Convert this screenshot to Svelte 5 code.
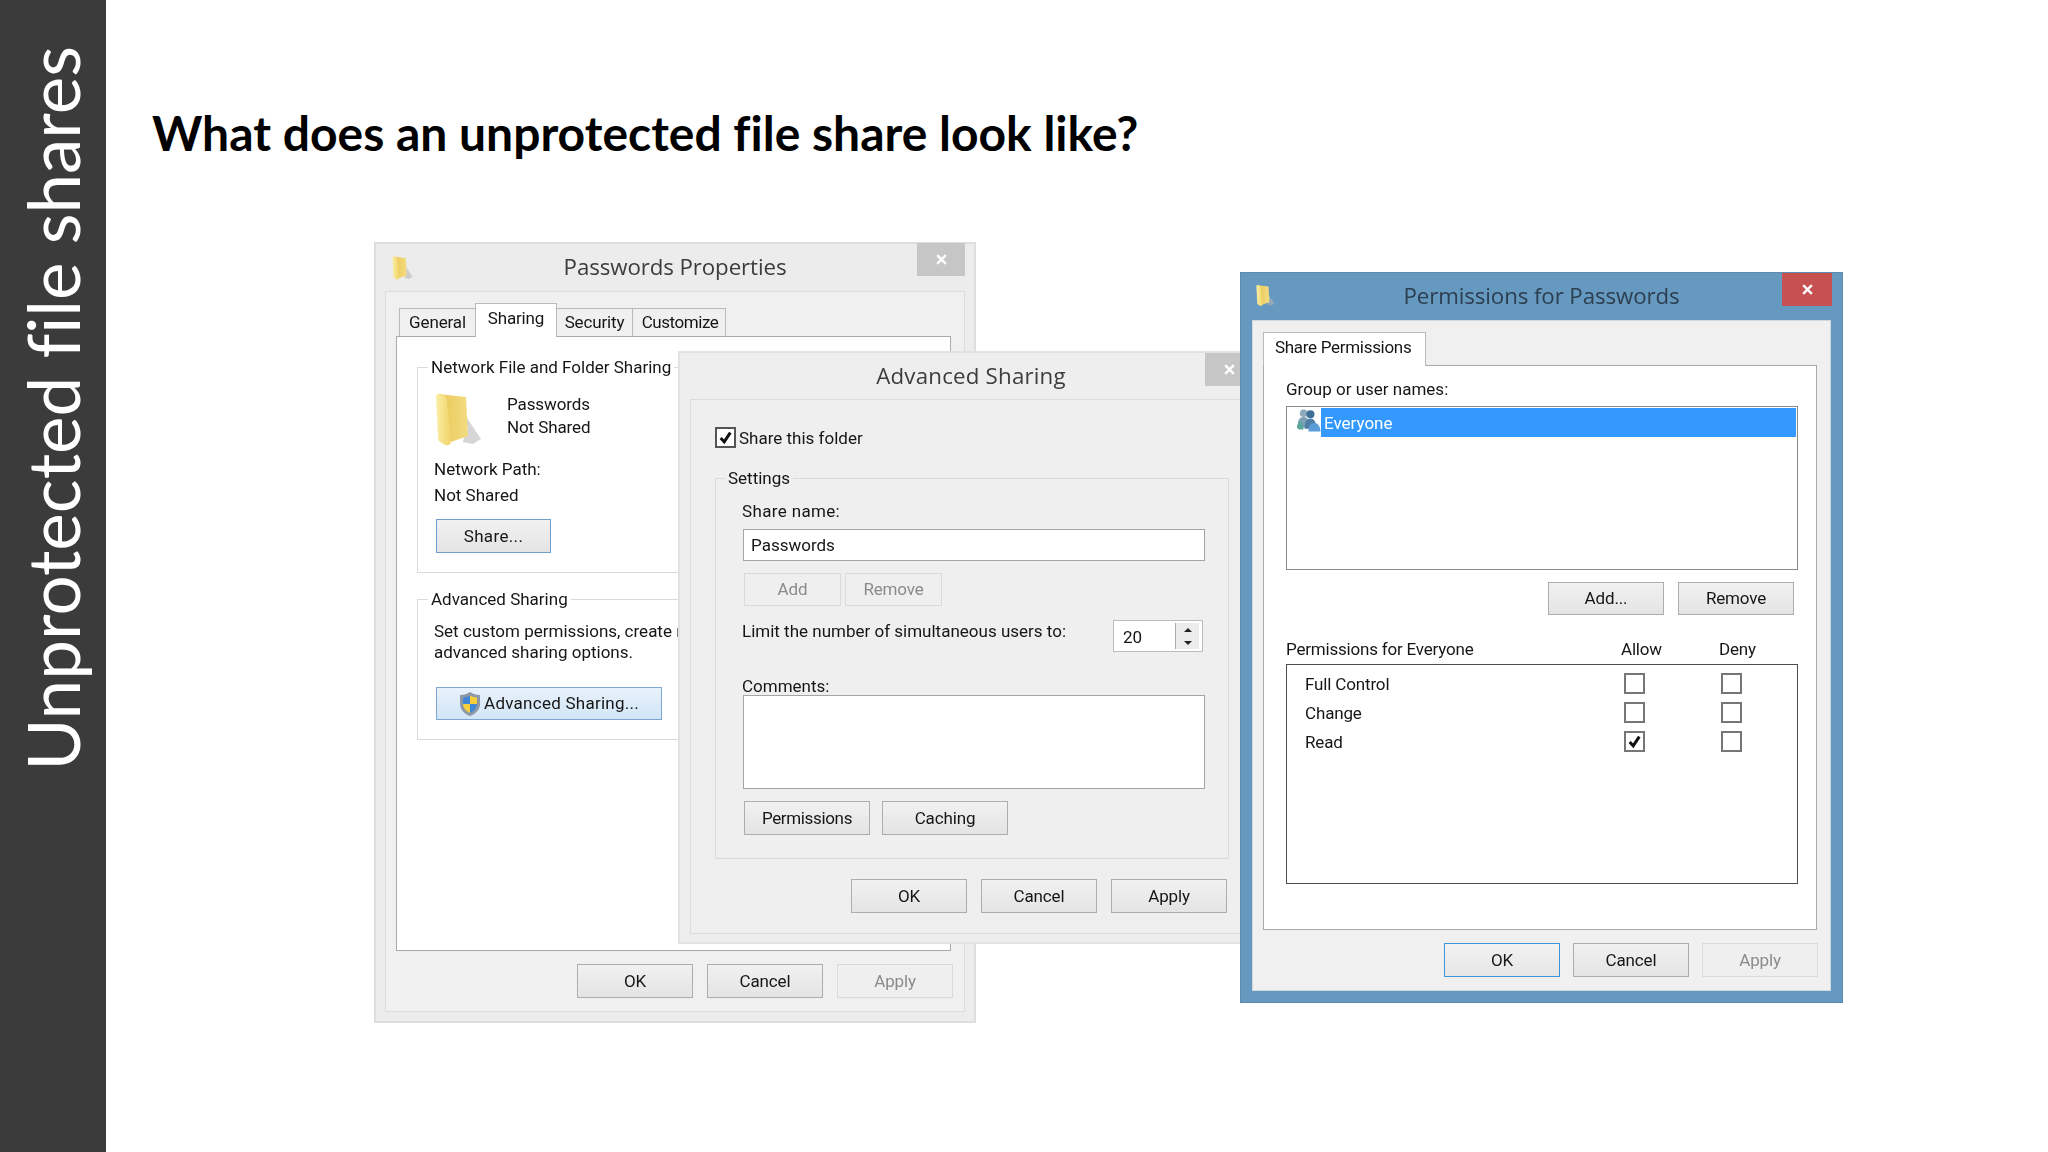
<script>
  const perms = [
    { name: 'Full Control', allow: false },
    { name: 'Change', allow: false },
    { name: 'Read', allow: true }
  ];
</script>

{#snippet folder()}
  <svg viewBox="0 0 47 55" class="fill">
    <defs>
      <linearGradient id="fa" x1="0" y1="0" x2="1" y2="0"><stop offset="0" stop-color="#fbeea6"/><stop offset="1" stop-color="#f0d467"/></linearGradient>
      <linearGradient id="fb" x1="0" y1="0" x2="1" y2="0"><stop offset="0" stop-color="#e9c655"/><stop offset="1" stop-color="#f3dc80"/></linearGradient>
    </defs>
    <path d="M32 26 L46 47 L38 52 L28 50Z" fill="#b5b5b5" opacity=".55"/>
    <path d="M3 2 L31 5 L33 44 L13 51Z" fill="url(#fb)"/>
    <path d="M1 5 C1 2 4 1 7 2 C11 3 12 6 12 10 L16 49 C16 52 14 54 10 53 L5 50 C3 49 3 47 3 45Z" fill="url(#fa)"/>
  </svg>
{/snippet}

{#snippet close()}
  <svg viewBox="0 0 12 12" class="x"><path d="M2 2 L10 10 M10 2 L2 10" stroke="#fff" stroke-width="2.2" fill="none"/></svg>
{/snippet}

{#snippet check()}
  <svg viewBox="0 0 14 14" class="tick"><path d="M2.5 7.5 L5.8 11 L11.5 2.5" stroke="#111" stroke-width="2.8" fill="none"/></svg>
{/snippet}

<div class="page">
  <aside class="side"><span class="side-text">Unprotected file shares</span></aside>

  <main class="stage">
    <h1>What does an unprotected file share look like?</h1>

    <!-- Passwords Properties -->
    <section class="win w1">
      <header class="titlebar">
        <span class="ficon">{@render folder()}</span>
        <span class="title">Passwords Properties</span>
        <span class="closebtn">{@render close()}</span>
      </header>
      <div class="client c1">
        <div class="tabs">
          <span class="tab t-gen">General</span>
          <span class="tab active t-sha">Sharing</span>
          <span class="tab t-sec">Security</span>
          <span class="tab t-cus">Customize</span>
        </div>
        <div class="panel p1">
          <fieldset class="grp g-net">
            <legend>Network File and Folder Sharing</legend>
            <div class="folder-row">
              <span class="bigfolder">{@render folder()}</span>
              <div class="folder-text"><div>Passwords</div><div>Not Shared</div></div>
            </div>
            <div class="path"><div>Network Path:</div><div>Not Shared</div></div>
            <button class="btn hot share">Share...</button>
          </fieldset>
          <fieldset class="grp g-adv">
            <legend>Advanced Sharing</legend>
            <div class="adv-text"><div>Set custom permissions, create r</div><div>advanced sharing options.</div></div>
            <button class="btn blue advbtn">
              <svg viewBox="0 0 22 26" class="shield">
                <path d="M11 1 C14 3 17 4 21 4 L21 13 C21 19 16 23 11 25 C6 23 1 19 1 13 L1 4 C5 4 8 3 11 1Z" fill="#8d98a6"/>
                <path d="M11 4.5 V13 H4 V6.5 C6.5 6.5 9 5.8 11 4.5Z" fill="#3f86d6"/>
                <path d="M11 4.5 V13 H18 V6.5 C15.5 6.5 13 5.8 11 4.5Z" fill="#f6cf3a"/>
                <path d="M4 13 H11 V22 C7.5 20.5 4.5 17.5 4 13Z" fill="#f6cf3a"/>
                <path d="M18 13 H11 V22 C14.5 20.5 17.5 17.5 18 13Z" fill="#3f86d6"/>
              </svg>
              <span>Advanced Sharing...</span>
            </button>
          </fieldset>
        </div>
        <div class="actions a1">
          <button class="btn">OK</button>
          <button class="btn">Cancel</button>
          <button class="btn off">Apply</button>
        </div>
      </div>
    </section>

    <!-- Advanced Sharing -->
    <section class="win w2">
      <header class="titlebar tb2">
        <span class="title">Advanced Sharing</span>
        <span class="closebtn cb2">{@render close()}</span>
      </header>
      <div class="client c2">
        <label class="checkline">
          <span class="cbox cbig">{@render check()}</span>
          <span>Share this folder</span>
        </label>
        <fieldset class="grp g-set">
          <legend>Settings</legend>
          <div class="lbl sn">Share name:</div>
          <div class="input">Passwords</div>
          <div class="pair">
            <button class="btn off add">Add</button>
            <button class="btn off add">Remove</button>
          </div>
          <div class="limit">
            <span>Limit the number of simultaneous users to:</span>
            <div class="spin">
              <span class="spinval">20</span>
              <div class="spinbtns">
                <svg viewBox="0 0 10 6" class="arr"><path d="M5 1 L9 5 H1Z" fill="#222"/></svg>
                <svg viewBox="0 0 10 6" class="arr"><path d="M1 1 H9 L5 5Z" fill="#222"/></svg>
              </div>
            </div>
          </div>
          <div class="lbl cm">Comments:</div>
          <div class="textarea"></div>
          <div class="pair two">
            <button class="btn perm p-name">Permissions</button>
            <button class="btn perm">Caching</button>
          </div>
        </fieldset>
        <div class="actions a2">
          <button class="btn">OK</button>
          <button class="btn">Cancel</button>
          <button class="btn">Apply</button>
        </div>
      </div>
    </section>

    <!-- Permissions for Passwords -->
    <section class="win w3">
      <header class="titlebar tb3">
        <span class="ficon f3">{@render folder()}</span>
        <span class="title">Permissions for Passwords</span>
        <span class="closebtn red">{@render close()}</span>
      </header>
      <div class="client c3">
        <div class="tabs tabs3"><span class="tab active t-share">Share Permissions</span></div>
        <div class="panel p3">
          <div class="lbl gu">Group or user names:</div>
          <div class="list">
            <div class="list-row">
              <svg viewBox="0 0 26 24" class="users">
                <circle cx="8" cy="5" r="4" fill="#8fa9bd"/>
                <path d="M2 20 C1 12 4 9 8 9 C12 9 14 12 14 20Z" fill="#7ba0b3"/>
                <circle cx="15" cy="6" r="4.2" fill="#3f6f98"/>
                <path d="M9 21 C9 14 11 10.5 15 10.5 C19 10.5 21 14 21 21Z" fill="#4c7ea6"/>
                <path d="M13 24 C13 18 15 15 19 15 C23 15 25 18 25.5 24Z" fill="#5a9bd8"/>
                <path d="M1 20 C1 16 3 14 6 14 L8 22 L3 22Z" fill="#5aa79a"/>
              </svg>
              <span class="sel">Everyone</span>
            </div>
          </div>
          <div class="list-actions">
            <button class="btn">Add...</button>
            <button class="btn">Remove</button>
          </div>
          <div class="perm-head">
            <span>Permissions for Everyone</span>
            <span class="h-allow">Allow</span>
            <span class="h-deny">Deny</span>
          </div>
          <div class="perm-box">
            {#each perms as p}
              <div class="perm-row">
                <span>{p.name}</span>
                <span class="cbox c-allow">{#if p.allow}{@render check()}{/if}</span>
                <span class="cbox c-deny"></span>
              </div>
            {/each}
          </div>
        </div>
        <div class="actions a3">
          <button class="btn default">OK</button>
          <button class="btn">Cancel</button>
          <button class="btn off">Apply</button>
        </div>
      </div>
    </section>
  </main>
</div>

<style>
  :global(body) { margin: 0; background: #fff; }
  .page { display: flex; width: 2048px; height: 1152px; overflow: hidden; font-family: Roboto, "Liberation Sans", sans-serif; color: #161616; }
  .side { width: 106px; flex: none; background: #3b3b3b; display: flex; flex-direction: column; align-items: center; }
  .side-text {
    writing-mode: vertical-rl; transform: rotate(180deg);
    margin-top: 46px; color: #fff; font-family: Lato, sans-serif; font-weight: 400; font-size: 71px; line-height: 80px; white-space: nowrap;
    font-variant-ligatures: none;
  }
  .stage { position: relative; flex: 1; }
  h1 { margin: 0; padding: 105px 0 0 46px; font-family: Lato, sans-serif; font-weight: 700; font-size: 48px; line-height: 56px; color: #000; white-space: nowrap; font-variant-ligatures: none; }

  .win { position: absolute; box-sizing: border-box; display: flex; flex-direction: column; filter: blur(.4px); }
  .w1 { left: 268px; top: 242px; width: 602px; height: 781px; background: #ececec; border: 2px solid #dedede; }
  .w2 { left: 572px; top: 351px; width: 562px; height: 593px; background: #eeeeee; border: 2px solid #e2e2e2; border-right: none; }
  .w3 { left: 1134px; top: 272px; width: 603px; height: 731px; background: #6699bf; border: 1px solid #5d8cb0; }

  .titlebar { position: relative; height: 47px; flex: none; display: flex; align-items: center; justify-content: center; padding-bottom: 2px; box-sizing: border-box; }
  .tb2 { height: 46px; padding-left: 22px; }
  .tb3 { height: 47px; }
  .title { font-family: "Open Sans", sans-serif; font-size: 22.3px; color: #3c3c3c; letter-spacing: -.1px; }
  .tb2 .title { letter-spacing: .2px; }
  .tb3 .title { color: #2c3e50; }
  .ficon { position: absolute; left: 16px; top: 11px; width: 21px; height: 26px; }
  .f3 { left: 15px; top: 10px; width: 19px; height: 25px; }
  .fill { display: block; width: 100%; height: 100%; }
  .closebtn { position: absolute; right: 9px; top: -1px; width: 48px; height: 33px; background: #c6c6c6; display: flex; align-items: center; justify-content: center; }
  .cb2 { right: -13px; top: 0; width: 48px; }
  .red { right: 10px; top: 0; width: 50px; background: #c75050; }
  .x { width: 13px; height: 13px; }

  .client { box-sizing: border-box; background: #f0f0f0; border: 1px solid #dcdcdc; display: flex; flex-direction: column; flex: 1; }
  .c1 { margin: 0 9px 9px 9px; padding: 11px 13px 0 10px; }
  .c2 { margin: 0 0 8px 10px; padding: 27px 11px 0 24px; border-right: none; background: #efefef; }
  .c3 { margin: 0 11px 11px 11px; padding: 11px 13px 0 10px; border: 1px solid #cfd8df; }

  .tabs { display: flex; align-items: flex-end; height: 33px; padding-left: 3px; position: relative; z-index: 1; }
  .tab { box-sizing: border-box; height: 28px; border: 1px solid #b9b9b9; border-bottom: none; background: #f0f0f0; font-size: 17px; line-height: 27px; text-align: center; letter-spacing: -.15px; }
  .tab.active { height: 34px; background: #fff; line-height: 29px; border-bottom: none; margin-bottom: -1px; padding-bottom: 5px; }
  .t-gen { width: 76px; border-right: none; }
  .t-sha { width: 82px; }
  .t-sec { width: 76px; border-left: none; }
  .t-cus { width: 93px; border-left: none; letter-spacing: -.45px; padding-left: 2px; }
  .tabs3 { padding-left: 0; }
  .t-share { width: 163px; text-align: left; padding-left: 11px; letter-spacing: -.3px; }

  .panel { background: #fff; border: 1px solid #a9a9a9; box-sizing: border-box; }
  .p1 { height: 615px; padding: 20px 0 0 20px; margin-right: 0; }
  .p3 { height: 565px; padding: 13px 18px 0 22px; }

  .grp { margin: 0; border: 1px solid #dadada; padding: 0 17px; font-size: 17px; min-width: 0; }
  legend { font-size: 17px; line-height: 20px; padding: 0 3px; margin-left: -7px; white-space: nowrap; }
  .g-net { padding-bottom: 19px; margin-right: -60px; }
  .g-adv { margin-top: 16px; margin-right: -60px; padding-bottom: 19px; }

  .folder-row { display: flex; margin-top: 15px; height: 55px; gap: 25px; }
  .bigfolder { width: 47px; height: 55px; display: block; }
  .folder-text { line-height: 23px; padding-top: 1px; letter-spacing: -.1px; }
  .path { margin: 9px 0 0 -1px; line-height: 26px; }
  .btn { box-sizing: border-box; display: inline-flex; align-items: center; justify-content: center; height: 33px; padding: 0; border: 1px solid #adadad; background: linear-gradient(#f1f1f1, #e4e4e4); color: #161616; font: 400 17px/1 Roboto, sans-serif; letter-spacing: -.15px; }
  .hot { border-color: #6f9ecb; }
  .share { display: flex; width: 115px; height: 34px; margin: 11px 0 0 1px; letter-spacing: .35px; }
  .adv-text { margin: 12px 0 0 -1px; line-height: 21px; white-space: nowrap; }
  .blue { border: 1px solid #7fa6d3; background: linear-gradient(#e8f2fb, #d2e5f7); }
  .advbtn { width: 226px; margin: 24px 0 0 1px; gap: 3px; display: flex; letter-spacing: .25px; }
  .shield { width: 22px; height: 26px; }
  .off { color: #8b8b8b; background: #efefef; border-color: #dadada; }

  .actions { display: flex; gap: 14px; justify-content: flex-end; }
  .actions .btn { width: 116px; height: 34px; }
  .a1 { margin: 13px -2px 0 0; }
  .a2 { margin-top: 20px; padding-right: 2px; }
  .a3 { margin: 13px -1px 0 0; gap: 13px; }
  .default { border: 1.5px solid #3c96d6; background: linear-gradient(#f2f2f2, #e6e6e6); }

  .checkline { display: flex; align-items: center; gap: 3px; font-size: 17px; height: 21px; }
  .cbox { box-sizing: border-box; display: flex; align-items: center; justify-content: center; width: 21px; height: 21px; border: 2px solid #767676; background: #fff; }
  .cbig { border-color: #555; }
  .tick { width: 15px; height: 15px; }

  .g-set { margin-top: 20px; margin-left: 0; padding: 0 23px 23px 26px; }
  .g-set legend { margin-left: -17px; }
  .lbl { font-size: 17px; line-height: 20px; }
  .sn { margin-top: 13px; letter-spacing: .35px; }
  .input { box-sizing: border-box; height: 32px; margin: 8px 0 0 1px; border: 1px solid #a5a5a5; background: #fff; padding-left: 7px; line-height: 30px; }
  .pair { display: flex; gap: 4px; margin: 12px 0 0 2px; }
  .add { width: 97px; height: 33px; }
  .limit { display: flex; justify-content: space-between; align-items: flex-start; margin-top: 14px; line-height: 22px; height: 32px; }
  .spin { box-sizing: border-box; width: 90px; height: 32px; margin-right: 2px; border: 1px solid #bcbcbc; background: #fff; display: flex; justify-content: space-between; align-items: center; padding: 2px 3px 2px 9px; }
  .spinval { margin-top: 2px; }
  .spinbtns { width: 23px; height: 26px; border-left: 1px solid #aaa; background: #ececec; display: flex; flex-direction: column; justify-content: space-around; align-items: center; }
  .arr { width: 10px; height: 6px; }
  .cm { margin-top: 24px; }
  .textarea { box-sizing: border-box; height: 94px; margin: -1px 0 0 1px; border: 1px solid #a5a5a5; background: #fff; }
  .two { gap: 12px; margin-top: 12px; }
  .perm { width: 126px; height: 34px; }
  .p-name { letter-spacing: -.35px; }

  .gu { margin-top: 0; }
  .list { box-sizing: border-box; height: 164px; margin-top: 7px; border: 1.5px solid #8a8a8a; padding: 1px; }
  .list-row { display: flex; height: 29px; padding-left: 8px; }
  .users { width: 25px; height: 24px; flex: none; }
  .sel { flex: 1; background: #3399ff; color: #fff; padding-left: 3px; line-height: 31px; font-size: 17px; }
  .list-actions { display: flex; justify-content: flex-end; gap: 14px; margin-top: 12px; padding-right: 4px; }
  .list-actions .btn { width: 116px; height: 33px; }
  .perm-head { display: grid; grid-template-columns: 335px 98px auto; margin-top: 24px; height: 20px; font-size: 17px; line-height: 20px; letter-spacing: -.2px; }
  .perm-box { box-sizing: border-box; height: 220px; margin-top: 5px; border: 1.5px solid #4d4d4d; padding: 8px 0 0 18px; display: flex; flex-direction: column; gap: 8px; }
  .perm-row { display: grid; grid-template-columns: 319px 97px 21px; align-items: center; height: 21px; font-size: 17px; letter-spacing: -.15px; }
</style>
